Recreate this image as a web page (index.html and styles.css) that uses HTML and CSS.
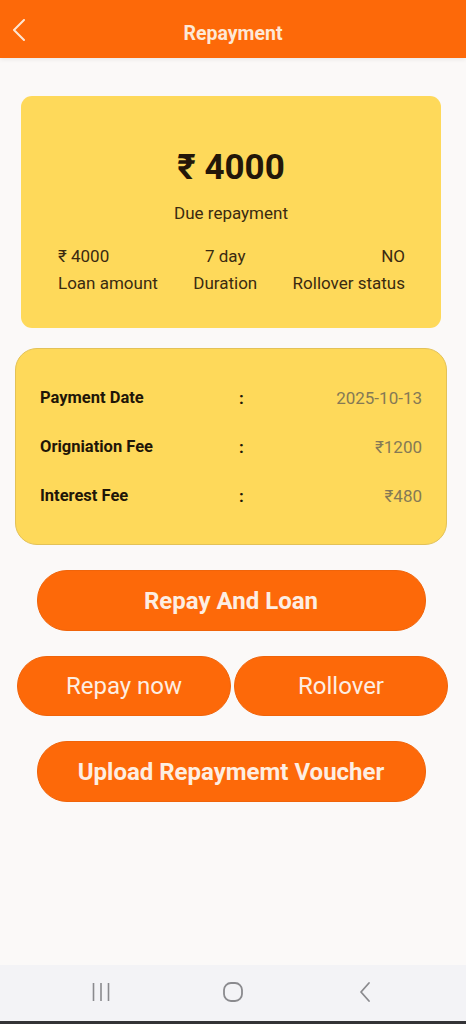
FILE: index.html
```html
<!DOCTYPE html>
<html lang="en">
<head>
  <meta charset="UTF-8" />
  <meta name="viewport" content="width=device-width, initial-scale=1.0"/>
  <title>Repayment</title>
  <link rel="stylesheet" href="styles.css">
</head>
<body>
  <div class="screen">
    <header class="topbar">
      <span class="back">
        <svg width="14" height="22" viewBox="0 0 14 22"><path d="M12 1 L2 11 L12 21" fill="none" stroke="#fde6d2" stroke-width="2" stroke-linecap="round" stroke-linejoin="round"/></svg>
      </span>
      <h1>Repayment</h1>
    </header>

    <main class="content">
      <section class="summary">
        <div class="amount">₹ 4000</div>
        <div class="due">Due repayment</div>
        <div class="stats">
          <div class="stat left">
            <div>₹ 4000</div>
            <div>Loan amount</div>
          </div>
          <div class="stat mid">
            <div>7 day</div>
            <div>Duration</div>
          </div>
          <div class="stat right">
            <div>NO</div>
            <div>Rollover status</div>
          </div>
        </div>
      </section>

      <section class="details">
        <div class="row">
          <span class="label">Payment Date</span>
          <span class="colon">:</span>
          <span class="value">2025-10-13</span>
        </div>
        <div class="row">
          <span class="label">Origniation Fee</span>
          <span class="colon">:</span>
          <span class="value">₹1200</span>
        </div>
        <div class="row">
          <span class="label">Interest Fee</span>
          <span class="colon">:</span>
          <span class="value">₹480</span>
        </div>
      </section>

      <div class="actions">
        <button class="btn wide bold">Repay And Loan</button>
        <div class="pair">
          <button class="btn">Repay now</button>
          <button class="btn">Rollover</button>
        </div>
        <button class="btn wide bold">Upload Repaymemt Voucher</button>
      </div>
    </main>

    <nav class="navbar">
      <span class="nav-slot">
        <svg width="20" height="20" viewBox="0 0 20 20"><path d="M2.5 1v18M10 1v18M17.5 1v18" stroke="#8a8a8e" stroke-width="1.6"/></svg>
      </span>
      <span class="nav-slot">
        <svg width="22" height="22" viewBox="0 0 22 22"><rect x="2" y="2" width="18" height="18" rx="7" fill="none" stroke="#8a8a8e" stroke-width="1.8"/></svg>
      </span>
      <span class="nav-slot">
        <svg width="14" height="22" viewBox="0 0 14 22"><path d="M11 2 L3 11 L11 20" fill="none" stroke="#8a8a8e" stroke-width="1.8" stroke-linecap="round" stroke-linejoin="round"/></svg>
      </span>
    </nav>
    <div class="bottom-edge"></div>
  </div>
</body>
</html>
```

FILE: styles.css
```css
* { box-sizing: border-box; }

body {
  margin: 0;
  font-family: Roboto, "Noto Sans", Arial, sans-serif;
  background: #fbf9f8;
  color: #2a1f0c;
}

.screen {
  width: 466px;
  height: 1024px;
  display: flex;
  flex-direction: column;
  overflow: hidden;
}

.topbar {
  height: 58px;
  flex-shrink: 0;
  background: #fd6909;
  display: flex;
  align-items: center;
  justify-content: center;
  position: relative;
  box-shadow: 0 2px 4px rgba(0, 0, 0, 0.06);
}

.topbar h1 {
  margin: 0;
  font-size: 19.5px;
  font-weight: 700;
  color: #fde8d6;
  padding-top: 8px;
}

.back {
  position: absolute;
  left: 12px;
  top: 19px;
  display: flex;
}

.content {
  flex: 1;
  padding: 38px 19px 0 15px;
}

.summary {
  margin: 0 6px;
  height: 232px;
  background: #fed95a;
  border-radius: 11px;
  padding-top: 52px;
  text-align: center;
}

.amount {
  font-size: 35px;
  font-weight: 700;
  line-height: 40px;
  color: #231709;
}

.due {
  margin-top: 13px;
  font-size: 17px;
  line-height: 24px;
  color: #3a2a10;
}

.stats {
  display: flex;
  justify-content: space-between;
  padding: 0 36px 0 37px;
  margin-top: 18px;
  font-size: 17px;
  line-height: 27px;
  color: #3a2a10;
}

.stat.left { text-align: left; }
.stat.mid { text-align: center; }
.stat.right { text-align: right; }

.details {
  margin-top: 20px;
  height: 197px;
  background: #fed95a;
  border: 1px solid #e3c258;
  border-radius: 22px;
  padding: 24px 24px 0 24px;
  display: flex;
  flex-direction: column;
}

.row {
  display: grid;
  grid-template-columns: 199px 10px 1fr;
  align-items: center;
  height: 49px;
}

.label {
  font-size: 16.5px;
  font-weight: 700;
  color: #1f1608;
}

.colon {
  font-size: 17px;
  font-weight: 700;
  color: #1f1608;
}

.value {
  text-align: right;
  font-size: 17px;
  color: #857955;
}

.actions {
  margin-top: 25px;
  display: flex;
  flex-direction: column;
  align-items: center;
  gap: 25px;
}

.btn {
  height: 60px;
  border: 1px solid #f0640a;
  border-radius: 30px;
  background: #fd6909;
  color: #fdeee2;
  font-family: Roboto, "Noto Sans", Arial, sans-serif;
  font-size: 24px;
  cursor: pointer;
}

.btn.bold { font-weight: 700; }

.btn.wide {
  width: 389px;
  height: 61px;
}

.pair {
  display: flex;
  gap: 3px;
  width: 431px;
  margin-left: 3px;
}

.pair .btn {
  flex: 1;
}

.navbar {
  height: 56px;
  flex-shrink: 0;
  background: #f3f3f6;
  display: flex;
  align-items: center;
  justify-content: center;
  padding-bottom: 2px;
}

.nav-slot {
  width: 132px;
  display: flex;
  justify-content: center;
}

.navbar svg { display: block; }

.bottom-edge {
  height: 3px;
  flex-shrink: 0;
  background: #333336;
}
```
